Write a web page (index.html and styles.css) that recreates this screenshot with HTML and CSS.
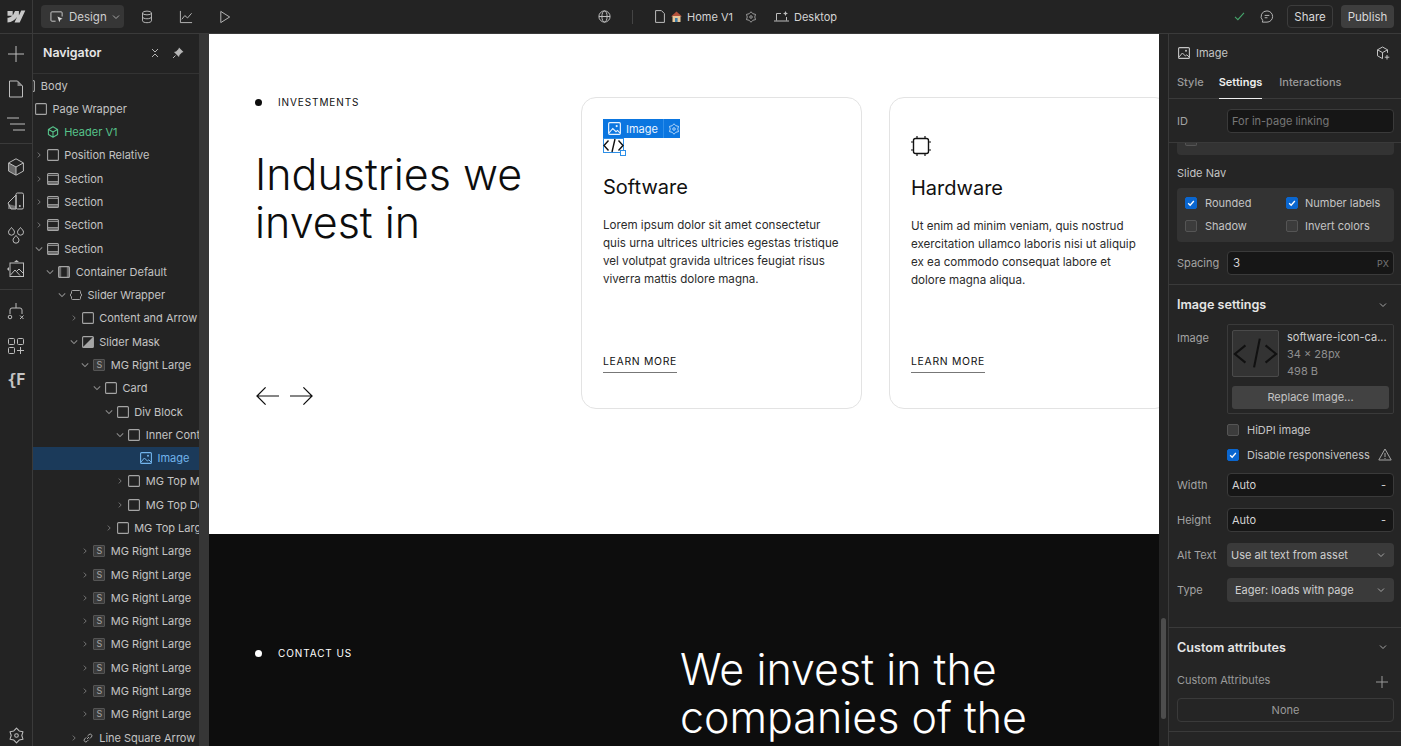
FILE: index.html
```html
<!DOCTYPE html>
<html lang="en">
<head>
<meta charset="utf-8">
<title>Webflow Designer</title>
<link rel="stylesheet" href="styles.css">
</head>
<body>
<svg class="sprite" aria-hidden="true">
  <defs>
    <symbol id="box" viewBox="0 0 12 12"><rect x=".6" y=".6" width="10.8" height="10.8" rx="1" fill="none" stroke="currentColor" stroke-width="1.1"/></symbol>
    <symbol id="section" viewBox="0 0 12 12"><rect x=".6" y=".6" width="10.8" height="10.8" rx="1" fill="none" stroke="currentColor" stroke-width="1.1"/><rect x="1" y="8.6" width="10" height="2.4" fill="currentColor" opacity=".55"/><path d="M1 8.5h10M1 2.5h10" stroke="currentColor" stroke-width=".8"/></symbol>
    <symbol id="container" viewBox="0 0 12 12"><rect x=".6" y=".6" width="10.8" height="10.8" rx="1" fill="none" stroke="currentColor" stroke-width="1.1"/><rect x="1" y="1" width="2.2" height="10" fill="currentColor" opacity=".55"/><rect x="8.8" y="1" width="2.2" height="10" fill="currentColor" opacity=".55"/></symbol>
    <symbol id="slider" viewBox="0 0 12 12"><path d="M2.500 1.500h7a1 1 0 0 1 1 1v1.600L11.800 6l-1.300 1.900v1.600a1 1 0 0 1-1 1h-7a1 1 0 0 1-1-1V7.900L.2 6l1.300-1.900V2.500a1 1 0 0 1 1-1z" fill="none" stroke="currentColor" stroke-width="1"/></symbol>
    <symbol id="mask" viewBox="0 0 12 12"><rect x=".6" y=".6" width="10.8" height="10.8" rx="1" fill="none" stroke="currentColor" stroke-width="1.1"/><path d="M11 1v10H1z" fill="currentColor"/></symbol>
    <symbol id="cube" viewBox="0 0 12 12"><path d="M6 .8l4.600 2.600v5.200L6 11.200 1.400 8.600V3.400zM1.600 3.500L6 6l4.400-2.500M6 6v5" fill="none" stroke="currentColor" stroke-width="1.100" stroke-linejoin="round"/></symbol>
    <symbol id="image" viewBox="0 0 12 12"><rect x=".6" y=".6" width="10.8" height="10.800" rx="1" fill="none" stroke="currentColor" stroke-width="1.100"/><path d="M1 10l3.400-4 3 3 1.400-1.200L11 10" fill="none" stroke="currentColor"/><circle cx="8" cy="3.800" r="1" fill="currentColor"/></symbol>
    <symbol id="link" viewBox="0 0 12 12"><path d="M5 7l2-2M4.200 5.400L2.600 7a1.600 1.600 0 0 0 2.400 2.400l1.600-1.600M7.800 6.600L9.400 5A1.600 1.600 0 0 0 7 2.600L5.400 4.200" fill="none" stroke="currentColor"/></symbol>
    <symbol id="chev-r" viewBox="0 0 6 8"><path d="M1.500 1l3 3-3 3" fill="none" stroke="currentColor"/></symbol>
    <symbol id="chev-d" viewBox="0 0 8 6"><path d="M1 1.500l3 3 3-3" fill="none" stroke="currentColor"/></symbol>
    <symbol id="gear" viewBox="0 0 16 16"><path d="M8 1l2.500 2.670 3.560.83L13 8l1.060 3.500-3.560.83L8 15l-2.500-2.670-3.560-.83L3 8 1.940 4.500l3.560-.83z" fill="none" stroke="currentColor" stroke-linejoin="round"/><circle cx="8" cy="8" r="1.700" fill="none" stroke="currentColor"/></symbol>
    <symbol id="check" viewBox="0 0 12 12"><path d="M2.600 6.200l2.400 2.400 4.400-5" fill="none" stroke="#fff" stroke-width="1.600"/></symbol>
  </defs>
</svg>

<div class="app">
  <header class="topbar">
    <div class="brand">
      <svg class="logo" viewBox="2 0 18 13"><path d="M19.800.5l-5.600 12H9l2.400-5.200h-.1c-2 2.900-4.900 4.800-9.300 5.200V7.800s2.800-.2 4.500-2.100H2V.9h5.200v4.300h.2L9.500.9h3.900v4.300h.1L15.700.5z" fill="#c9c9c9"/></svg>
    </div>
    <div class="tools">
      <div class="design-btn">
        <svg class="ico15" viewBox="0 0 15 15"><path d="M6 12H2a1 1 0 0 1-1-1V3a1 1 0 0 1 1-1h10a1 1 0 0 1 1 1v4" fill="none" stroke="currentColor"/><path d="M8 7l5.400 2.400-2.400 1-1 2.600z" fill="#ddd"/></svg>
        <span>Design</span>
        <svg class="ico8" viewBox="0 0 8 6"><use href="#chev-d"/></svg>
      </div>
      <svg class="ico15 tool" viewBox="0 0 15 15"><ellipse cx="7.500" cy="3.200" rx="4.800" ry="2" fill="none" stroke="currentColor"/><path d="M2.700 3.200v8.400c0 1.100 2.200 2 4.800 2s4.800-.9 4.800-2V3.200M2.700 7.400c0 1.100 2.200 2 4.800 2s4.800-.9 4.800-2" fill="none" stroke="currentColor"/></svg>
      <svg class="ico15 tool" viewBox="0 0 15 15"><path d="M1.500 1v12.500H14M3 10l3.200-4 3 2.500L13.500 3.500" fill="none" stroke="currentColor"/></svg>
      <svg class="ico15 tool" viewBox="0 0 15 15"><path d="M3 1.500l9.500 6-9.500 6z" fill="none" stroke="currentColor" stroke-linejoin="round"/></svg>
    </div>
    <div class="center">
      <svg class="ico13" viewBox="0 0 13 13"><circle cx="6.500" cy="6.500" r="5.600" fill="none" stroke="currentColor"/><ellipse cx="6.500" cy="6.500" rx="2.600" ry="5.600" fill="none" stroke="currentColor"/><path d="M1 6.500h11" stroke="currentColor"/></svg>
      <span class="vsep"></span>
      <svg class="ico-doc" viewBox="0 0 10 13"><path d="M.6.600h5.800l3 3v8.800H.6z" fill="none" stroke="currentColor"/></svg>
      <svg class="ico-house" viewBox="0 0 11 11"><path d="M5.500.500L11 5.500H0z" fill="#b5523b"/><rect x="1.500" y="5" width="8" height="6" fill="#e8c79a"/><rect x="4" y="7" width="2.600" height="4" fill="#3f7ea8"/></svg>
      <span class="home">Home V1</span>
      <svg class="ico12 gear" viewBox="0 0 16 16"><use href="#gear"/></svg>
      <svg class="ico-desk" viewBox="0 0 15 12"><path d="M7 2.500H2.500v7M0 10h15M12.500 6v3.500" fill="none" stroke="currentColor"/><path d="M11.500 0l.8 1.700 1.700.8-1.700.8-.8 1.700-.8-1.700-1.700-.8 1.700-.8z" fill="currentColor"/></svg>
      <span class="desk">Desktop</span>
    </div>
    <div class="actions">
      <svg class="ico-ok" viewBox="0 0 12 10"><path d="M1 5.500l3.200 3L11 1" fill="none" stroke="#46a66c" stroke-width="1.200"/></svg>
      <svg class="ico15 comment" viewBox="0 0 15 15"><path d="M7.500 1a6 6 0 0 1 0 12H2.500l.4-1.800A6 6 0 0 1 7.500 1z" fill="none" stroke="currentColor"/><path d="M5 5.800h5M5 8.300h3" stroke="currentColor"/></svg>
      <button class="btn-share">Share</button>
      <button class="btn-publish">Publish</button>
    </div>
  </header>

  <div class="body">
    <nav class="rail">
      <div class="rail-top">
        <svg class="rail-ico" viewBox="0 0 18 18"><path d="M9 1v16M1 9h16" stroke="currentColor"/></svg>
        <svg class="rail-ico" viewBox="0 0 18 18"><path d="M2.500 1h8l5 5v11h-13z" fill="none" stroke="currentColor" stroke-linejoin="round"/><path d="M10.500 1l5 5h-5z" fill="currentColor" opacity=".6"/></svg>
        <svg class="rail-ico" viewBox="0 0 18 18"><path d="M0 3h12M3 9h15M6 15h12" stroke="currentColor"/></svg>
      </div>
      <div class="rail-mid">
        <svg class="rail-ico" viewBox="0 0 18 18"><path d="M9 .8l7.400 4.100v8.200L9 17.200l-7.400-4.100V4.900zM1.800 5L9 9l7.200-4M9 9v8" fill="none" stroke="currentColor"/><path d="M1.800 5L9 9v8l-7.200-4z" fill="currentColor" opacity=".45"/></svg>
        <svg class="rail-ico" viewBox="0 0 18 18"><rect x="9" y="1" width="7.500" height="16" rx="1.500" fill="none" stroke="currentColor"/><path d="M9 3L1 11l3 6h5z" fill="none" stroke="currentColor"/><path d="M1 12v5h8v-3z" fill="currentColor" opacity=".5"/><circle cx="12.800" cy="14" r="1" fill="currentColor"/></svg>
        <svg class="rail-ico" viewBox="0 0 18 18"><path d="M4.500 1.500c1.500 2 3 3 3 4.700a3 3 0 0 1-6 0C1.500 4.500 3 3.500 4.500 1.500zM13.500 1.500c1.500 2 3 3 3 4.700a3 3 0 0 1-6 0c0-1.700 1.500-2.700 3-4.700zM9 9.500c1.500 2 3 3 3 4.700a3 3 0 0 1-6 0c0-1.700 1.500-2.700 3-4.700z" fill="none" stroke="currentColor"/></svg>
        <svg class="rail-ico" viewBox="0 0 18 18"><rect x="3" y="3" width="13.500" height="13.500" fill="none" stroke="currentColor"/><path d="M3.500 15l4.500-5 5 5.500M10 11l2-2 4 4" fill="none" stroke="currentColor"/><path d="M0 9l2 -2v4z" fill="currentColor"/><path d="M7 2l2.500-2L12 2z" fill="currentColor"/></svg>
      </div>
      <div class="rail-low">
        <svg class="rail-ico" viewBox="0 0 18 18"><path d="M9 0v5M3 11V7a2 2 0 0 1 2-2h8a2 2 0 0 1 2 2v4" fill="none" stroke="currentColor"/><circle cx="3" cy="14" r="1.800" fill="none" stroke="currentColor"/><path d="M13 12.500l3.500 3.500M16.500 12.500L13 16" stroke="currentColor"/></svg>
        <svg class="rail-ico" viewBox="0 0 18 18"><rect x="1.500" y="1.500" width="6" height="6" rx="1" fill="none" stroke="currentColor"/><rect x="10.500" y="1.500" width="6" height="6" rx="1" fill="none" stroke="currentColor"/><rect x="1.500" y="10.500" width="6" height="6" rx="1" fill="none" stroke="currentColor"/><path d="M13.500 10v7M10 13.500h7" stroke="currentColor"/></svg>
        <span class="rail-f">{F</span>
      </div>
      <svg class="rail-ico rail-gear" viewBox="0 0 16 16"><use href="#gear"/></svg>
    </nav>

    <aside class="navigator">
      <div class="nav-head">
        <span class="nav-title">Navigator</span>
        <svg class="ico-collapse" viewBox="0 0 8 10"><path d="M1 1l3 3 3-3M1 9l3-3 3 3" fill="none" stroke="currentColor"/></svg>
        <svg class="ico-pin" viewBox="0 0 12 12"><path d="M7 .5l4.500 4.500-1.500.5L7.500 8l-.5 2L2 5l2-.5L6.500 2z" fill="currentColor"/><path d="M3.500 8.500L1 11" stroke="currentColor"/></svg>
      </div>
      <ul class="tree">
        <li class="row dm1"><i class="chev"></i><svg class="ni"><use href="#box"/></svg><span>Body</span></li>
        <li class="row d0"><i class="chev"></i><svg class="ni"><use href="#box"/></svg><span>Page Wrapper</span></li>
        <li class="row d1 comp"><i class="chev"></i><svg class="ni"><use href="#cube"/></svg><span>Header V1</span></li>
        <li class="row d1"><svg class="chev"><use href="#chev-r"/></svg><svg class="ni"><use href="#box"/></svg><span>Position Relative</span></li>
        <li class="row d1"><svg class="chev"><use href="#chev-r"/></svg><svg class="ni"><use href="#section"/></svg><span>Section</span></li>
        <li class="row d1"><svg class="chev"><use href="#chev-r"/></svg><svg class="ni"><use href="#section"/></svg><span>Section</span></li>
        <li class="row d1"><svg class="chev"><use href="#chev-r"/></svg><svg class="ni"><use href="#section"/></svg><span>Section</span></li>
        <li class="row d1"><svg class="chev"><use href="#chev-d"/></svg><svg class="ni"><use href="#section"/></svg><span>Section</span></li>
        <li class="row d2"><svg class="chev"><use href="#chev-d"/></svg><svg class="ni"><use href="#container"/></svg><span>Container Default</span></li>
        <li class="row d3"><svg class="chev"><use href="#chev-d"/></svg><svg class="ni"><use href="#slider"/></svg><span>Slider Wrapper</span></li>
        <li class="row d4"><svg class="chev"><use href="#chev-r"/></svg><svg class="ni"><use href="#box"/></svg><span>Content and Arrow</span></li>
        <li class="row d4"><svg class="chev"><use href="#chev-d"/></svg><svg class="ni"><use href="#mask"/></svg><span>Slider Mask</span></li>
        <li class="row d5"><svg class="chev"><use href="#chev-d"/></svg><span class="ni sym">S</span><span>MG Right Large</span></li>
        <li class="row d6"><svg class="chev"><use href="#chev-d"/></svg><svg class="ni"><use href="#box"/></svg><span>Card</span></li>
        <li class="row d7"><svg class="chev"><use href="#chev-d"/></svg><svg class="ni"><use href="#box"/></svg><span>Div Block</span></li>
        <li class="row d8"><svg class="chev"><use href="#chev-d"/></svg><svg class="ni"><use href="#box"/></svg><span>Inner Content</span></li>
        <li class="row d9 selected"><i class="chev"></i><svg class="ni"><use href="#image"/></svg><span>Image</span></li>
        <li class="row d8"><svg class="chev"><use href="#chev-r"/></svg><svg class="ni"><use href="#box"/></svg><span>MG Top Medium</span></li>
        <li class="row d8"><svg class="chev"><use href="#chev-r"/></svg><svg class="ni"><use href="#box"/></svg><span>MG Top Default</span></li>
        <li class="row d7"><svg class="chev"><use href="#chev-r"/></svg><svg class="ni"><use href="#box"/></svg><span>MG Top Large</span></li>
        <li class="row d5"><svg class="chev"><use href="#chev-r"/></svg><span class="ni sym">S</span><span>MG Right Large</span></li>
        <li class="row d5"><svg class="chev"><use href="#chev-r"/></svg><span class="ni sym">S</span><span>MG Right Large</span></li>
        <li class="row d5"><svg class="chev"><use href="#chev-r"/></svg><span class="ni sym">S</span><span>MG Right Large</span></li>
        <li class="row d5"><svg class="chev"><use href="#chev-r"/></svg><span class="ni sym">S</span><span>MG Right Large</span></li>
        <li class="row d5"><svg class="chev"><use href="#chev-r"/></svg><span class="ni sym">S</span><span>MG Right Large</span></li>
        <li class="row d5"><svg class="chev"><use href="#chev-r"/></svg><span class="ni sym">S</span><span>MG Right Large</span></li>
        <li class="row d5"><svg class="chev"><use href="#chev-r"/></svg><span class="ni sym">S</span><span>MG Right Large</span></li>
        <li class="row d5"><svg class="chev"><use href="#chev-r"/></svg><span class="ni sym">S</span><span>MG Right Large</span></li>
        <li class="row d4"><svg class="chev"><use href="#chev-r"/></svg><svg class="ni"><use href="#link"/></svg><span>Line Square Arrow</span></li>
      </ul>
    </aside>
    <div class="gutter-left"></div>

    <main class="canvas">
      <section class="light">
        <div class="intro">
          <div class="tag"><i class="dot"></i><span>INVESTMENTS</span></div>
          <h1 class="display">Industries we<br>invest in</h1>
          <div class="arrows">
            <svg class="arrow" viewBox="0 0 24 20"><path d="M24 10H1M10 1l-9 9 9 9" fill="none" stroke="#0d0d0d" stroke-width="1.300"/></svg>
            <svg class="arrow" viewBox="0 0 24 20"><path d="M0 10h23M14 1l9 9-9 9" fill="none" stroke="#0d0d0d" stroke-width="1.300"/></svg>
          </div>
        </div>
        <div class="cards">
          <article class="card first">
            <div class="sel">
              <div class="sel-label">
                <svg class="sel-img" viewBox="0 0 12 12"><use href="#image"/></svg>
                <span>Image</span>
                <i class="sel-sep"></i>
                <svg class="sel-gear" viewBox="0 0 16 16"><use href="#gear"/></svg>
              </div>
              <svg class="code-ico" viewBox="0 0 21 15"><path d="M5.500 2.500L1 7.500l4.500 5M15.500 2.500l4.500 5-4.500 5M12 1L9 14" fill="none" stroke="#111" stroke-width="1.400"/></svg>
              <i class="sel-handle"></i>
            </div>
            <h3>Software</h3>
            <p>Lorem ipsum dolor sit amet consectetur<br>quis urna ultrices ultricies egestas tristique<br>vel volutpat gravida ultrices feugiat risus<br>viverra mattis dolore magna.</p>
            <a class="more">LEARN MORE</a>
          </article>
          <article class="card second">
            <svg class="chip" viewBox="0 0 20 20"><rect x="2.500" y="2.500" width="15" height="15" rx="2" fill="none" stroke="#111" stroke-width="1.400"/><path d="M6 0v2.500M14 0v2.500M6 17.500V20M14 17.500V20M0 6h2.500M0 14h2.500M17.500 6H20M17.500 14H20" stroke="#111" stroke-width="1.200"/></svg>
            <h3>Hardware</h3>
            <p>Ut enim ad minim veniam, quis nostrud<br>exercitation ullamco laboris nisi ut aliquip<br>ex ea commodo consequat labore et<br>dolore magna aliqua.</p>
            <a class="more">LEARN MORE</a>
          </article>
        </div>
      </section>
      <section class="dark">
        <div class="tag tag-dark"><i class="dot"></i><span>CONTACT US</span></div>
        <h2 class="display">We invest in the<br>companies of the</h2>
      </section>
    </main>

    <div class="gutter-right"><i class="thumb"></i></div>

    <aside class="panel">
      <div class="panel-sticky">
        <div class="p-head">
          <svg class="ico12" viewBox="0 0 12 12"><use href="#image"/></svg>
          <span>Image</span>
          <svg class="ico-addc" viewBox="0 0 14 14"><path d="M6.500 1l5 2.800v3M1.500 3.800v6l5 2.800M1.500 3.800L6.500 1M1.500 3.800l5 2.800 5-2.800M6.500 6.600v6" fill="none" stroke="currentColor"/><path d="M11 9v4.500M8.800 11.200h4.500" stroke="currentColor"/></svg>
        </div>
        <div class="tabs">
          <span>Style</span><span class="active">Settings</span><span>Interactions</span>
        </div>
        <div class="id-row">
          <label>ID</label>
          <div class="field ph">For in-page linking</div>
        </div>
      </div>

      <div class="clipbox"><i class="cb"></i></div>
      <div class="slide-title">Slide Nav</div>
      <div class="optbox">
        <div class="opt"><i class="cb on"><svg viewBox="0 0 12 12"><use href="#check"/></svg></i><span>Rounded</span></div>
        <div class="opt"><i class="cb on"><svg viewBox="0 0 12 12"><use href="#check"/></svg></i><span>Number labels</span></div>
        <div class="opt"><i class="cb"></i><span>Shadow</span></div>
        <div class="opt"><i class="cb"></i><span>Invert colors</span></div>
      </div>
      <div class="prop spacing"><label>Spacing</label><div class="field"><span>3</span><em>PX</em></div></div>

      <div class="group image-group">
        <div class="g-head"><span>Image settings</span><svg class="ico8" viewBox="0 0 8 6"><use href="#chev-d"/></svg></div>
        <div class="img-row">
          <label>Image</label>
          <div class="asset">
            <div class="asset-top">
              <div class="thumbimg"><svg viewBox="0 0 47 47"><path d="M13 15L2 24l11 9M34 15l11 9-11 9M28 8l-6 30" fill="none" stroke="#111" stroke-width="2.200"/></svg></div>
              <div class="asset-meta"><strong>software-icon-ca...</strong><span>34 x 28px</span><span>498 B</span></div>
            </div>
            <div class="replace">Replace Image...</div>
          </div>
        </div>
        <div class="opt wide hidpi"><i class="cb big"></i><span>HiDPI image</span></div>
        <div class="opt wide disable"><i class="cb big on"><svg viewBox="0 0 12 12"><use href="#check"/></svg></i><span>Disable responsiveness</span>
          <svg class="warn" viewBox="0 0 14 13"><path d="M7 1l6.200 11H.8z" fill="none" stroke="currentColor" stroke-linejoin="round"/><path d="M7 5v4M7 10v1" stroke="currentColor"/></svg>
        </div>
        <div class="prop"><label>Width</label><div class="field"><span>Auto</span><b>-</b></div></div>
        <div class="prop"><label>Height</label><div class="field"><span>Auto</span><b>-</b></div></div>
        <div class="prop"><label>Alt Text</label><div class="select alt"><span>Use alt text from asset</span><svg class="ico8" viewBox="0 0 8 6"><use href="#chev-d"/></svg></div></div>
        <div class="prop"><label>Type</label><div class="select"><span>Eager: loads with page</span><svg class="ico8" viewBox="0 0 8 6"><use href="#chev-d"/></svg></div></div>
      </div>

      <div class="group attrs">
        <div class="g-head"><span>Custom attributes</span><svg class="ico8" viewBox="0 0 8 6"><use href="#chev-d"/></svg></div>
        <div class="attr-label"><span>Custom Attributes</span><svg class="ico-plus" viewBox="0 0 12 12"><path d="M6 0v12M0 6h12" stroke="currentColor"/></svg></div>
        <div class="none-box">None</div>
      </div>
    </aside>
  </div>
</div>
</body>
</html>
```
FILE: styles.css
```css
* { box-sizing: border-box; }
html, body { margin: 0; padding: 0; height: 100%; background: #fff; overflow: hidden; }
body { font-family: Inter, "Liberation Sans", sans-serif; font-size: 11px; color: #d9d9d9; }
.sprite { width: 0; height: 0; display: block; overflow: hidden; }
ul { list-style: none; margin: 0; padding: 0; }
svg { display: block; flex: none; }
i { font-style: normal; display: block; }

.app { height: 746px; display: flex; flex-direction: column; background: #232323; }

/* top bar */
.topbar { height: 34px; flex: none; display: flex; align-items: center; background: #232323; border-bottom: 1px solid #3a3a3a; }
.brand { width: 33px; height: 33px; flex: none; display: flex; align-items: center; justify-content: center; border-right: 1px solid #3a3a3a; }
.logo { width: 19px; height: 13px; }
.tools { display: flex; align-items: center; width: 225px; flex: none; padding-left: 8px; color: #bdbdbd; }
.design-btn { width: 83px; height: 23px; flex: none; background: #363636; border-radius: 4px; display: flex; align-items: center; padding-left: 9px; gap: 5px; color: #cfcfcf; font-size: 11.5px; margin-right: 16px; }
.ico15 { width: 14px; height: 14px; }
.ico8 { width: 8px; height: 6px; color: #a5a5a5; }
.tool { margin-right: 25px; }
.center { display: flex; align-items: center; padding-left: 340px; color: #bdbdbd; font-size: 11px; }
.ico13 { width: 13px; height: 13px; }
.vsep { width: 1px; height: 14px; background: #444; margin: 0 21px; }
.ico-doc { width: 10px; height: 13px; margin-right: 6px; margin-left: 1px; }
.ico-house { width: 11px; height: 11px; margin-right: 5px; }
.home { color: #d4d4d4; }
.gear { margin-left: 12px; width: 13px; height: 13px; }
.ico12 { width: 12px; height: 12px; }
.ico-desk { width: 15px; height: 12px; margin-left: 17px; margin-right: 5px; }
.desk { color: #d4d4d4; }
.actions { display: flex; align-items: center; margin-left: auto; padding-right: 7px; color: #bdbdbd; }
.ico-ok { width: 11px; height: 9px; margin-right: 15px; }
.comment { margin-right: 13px; }
button { font: inherit; font-size: 11.5px; height: 23px; border-radius: 4px; color: #d9d9d9; padding: 0; }
.btn-share { width: 46px; background: #232323; border: 1px solid #3c3c3c; margin-right: 8px; }
.btn-publish { width: 53px; background: #3e3e3e; border: 0; }

/* main */
.body { flex: 1; min-height: 0; display: flex; }
.rail { width: 33px; flex: none; background: #232323; border-right: 1px solid #3a3a3a; display: flex; flex-direction: column; color: #bdbdbd; }
.rail-ico { width: 18px; height: 18px; margin: 0 auto; }
.rail-top { height: 110px; padding-top: 11px; display: flex; flex-direction: column; gap: 17px; border-bottom: 1px solid #3a3a3a; }
.rail-mid { height: 146px; padding-top: 14px; display: flex; flex-direction: column; gap: 16px; border-bottom: 1px solid #3a3a3a; }
.rail-low { padding-top: 13px; display: flex; flex-direction: column; gap: 16px; }
.rail-f { text-align: center; font-size: 16px; line-height: 18px; font-weight: 700; font-family: "DejaVu Sans Mono", monospace; letter-spacing: -1px; color: #c4c4c4; }
.rail-gear { margin-top: auto; margin-bottom: 2px; width: 17px; height: 17px; }

.navigator { width: 166px; flex: none; background: #232323; overflow: hidden; }
.nav-head { height: 40px; display: flex; align-items: center; padding: 0 0 2px 10px; border-bottom: 1px solid #333; color: #b5b5b5; }
.nav-title { font-size: 12.4px; font-weight: 600; color: #e6e6e6; flex: 1; }
.ico-collapse { width: 8px; height: 10px; margin-right: 13px; }
.ico-pin { width: 12px; height: 12px; margin-right: 15px; }
.row { --d: 0; height: 23.29px; display: flex; align-items: center; white-space: nowrap; overflow: hidden; color: #c4c4c4; }
.row .chev { width: 12px; height: 8px; flex: none; margin-left: calc(var(--d) * 11.67px - 12px); margin-right: 2px; color: #8a8a8a; }
.row .chev use { transform: scale(.8); transform-origin: 6px 4px; }
.row .ni { width: 12px; height: 12px; flex: none; margin-right: 5.5px; color: #a5a5a5; }
.dm1 { --d: -1; } .d0 { --d: 0; } .d1 { --d: 1; } .d2 { --d: 2; } .d3 { --d: 3; } .d4 { --d: 4; }
.d5 { --d: 5; } .d6 { --d: 6; } .d7 { --d: 7; } .d8 { --d: 8; } .d9 { --d: 9; }
.comp, .comp .ni { color: #56c28a; }
.selected { background: #1b3a5a; color: #72b4ec; }
.selected .ni { color: #72b4ec; }
.sym { background: #3a3a3a; border: 1px solid #555; border-radius: 1px; font-size: 9px; line-height: 10px; text-align: center; color: #bbb; font-style: normal; }
.gutter-left { width: 10px; flex: none; background: #363636; }

/* canvas */
.canvas { width: 950px; flex: none; background: #fff; overflow: hidden; display: flex; flex-direction: column; font-family: Inter, sans-serif; color: #0d0d0d; }
.light { height: 500px; flex: none; display: flex; padding: 61px 0 0 46px; background: #fff; }
.intro { width: 326px; flex: none; }
.tag { height: 14px; display: flex; align-items: center; gap: 16px; font-size: 10px; letter-spacing: .9px; color: #111; }
.dot { width: 7px; height: 7px; border-radius: 50%; background: #0d0d0d; }
.display { margin: 0; font-size: 43px; line-height: 48px; font-weight: 300; color: #0d0d0d; white-space: nowrap; }
h1.display { margin-top: 41px; }
.arrows { margin-top: 140px; display: flex; gap: 11px; padding-left: 1px; }
.arrow { width: 23px; height: 20px; }
.cards { display: flex; gap: 27px; margin-top: 2px; }
.card { width: 281px; height: 312px; flex: none; border: 1px solid #e3e3e3; border-radius: 15px; padding: 40px 21px 35px; display: flex; flex-direction: column; background: #fff; }
.card.second { padding-top: 38px; }
.card h3 { margin: 21px 0 16px; font-size: 20px; line-height: 26px; font-weight: 400; color: #111; }
.card.second h3 { margin-top: 19px; }
.card p { margin: 0; font-size: 11.6px; line-height: 18px; color: #2b2b2b; white-space: nowrap; }
.more { margin-top: auto; align-self: flex-start; font-size: 10.4px; line-height: 14px; letter-spacing: .7px; color: #111; padding-bottom: 3px; border-bottom: 1px solid #777; }
.sel { position: relative; width: 21px; height: 15px; box-shadow: inset 0 0 0 1px #2d8fe8; }
.code-ico { width: 21px; height: 15px; }
.sel-label { position: absolute; left: 0; top: -19px; width: 77px; height: 19px; background: #0b76e0; color: #e8f3ff; display: flex; align-items: center; padding-left: 5px; gap: 5px; font-size: 11px; white-space: nowrap; }
.sel-img { width: 13px; height: 13px; }
.sel-sep { width: 1px; height: 19px; background: #2e8eea; }
.sel-gear { width: 12px; height: 12px; margin-left: -1px; }
.sel-handle { position: absolute; right: -2px; bottom: -3px; width: 6px; height: 6px; background: #fff; border: 1px solid #2d8fe8; }
.chip { width: 20px; height: 20px; margin-left: 0; }
.dark { flex: 1; background: #0d0d0d; display: flex; padding: 112px 0 0 46px; overflow: hidden; }
.tag-dark { width: 425px; flex: none; color: #fff; }
.tag-dark .dot { background: #fff; }
.dark .display { color: #fff; margin-top: -1px; }

.gutter-right { width: 10px; flex: none; background: #232323; border-right: 1px solid #3a3a3a; padding: 584px 0 0 2px; }
.thumb { width: 5px; height: 101px; border-radius: 3px; background: #4d4d4d; }

/* right panel */
.panel { flex: 1; background: #252525; overflow: hidden; color: #c4c4c4; min-width: 0; }
.panel-sticky { border-bottom: 1px solid #3a3a3a; }
.p-head { height: 34px; display: flex; align-items: center; gap: 6px; padding: 3px 11px 0 9px; color: #c4c4c4; }
.ico-addc { width: 14px; height: 14px; margin-left: auto; }
.tabs { height: 31px; display: flex; gap: 15px; padding: 0 8px; align-items: center; border-bottom: 1px solid #3a3a3a; color: #9a9a9a; font-weight: 500; }
.tabs span { height: 31px; line-height: 28px; }
.tabs .active { color: #eee; font-weight: 600; border-bottom: 1px solid #eee; margin-right: 2px; }
.id-row { height: 43px; display: flex; align-items: center; padding: 0 7px 0 8px; }
label { width: 50px; flex: none; color: #a3a3a3; }
.field { flex: 1; height: 24px; border: 1px solid #3a3a3a; border-radius: 4px; background: #161616; display: flex; align-items: center; justify-content: space-between; padding: 0 4px; color: #d4d4d4; }
.field em { font-style: normal; font-size: 9px; color: #777; }
.field b { font-weight: 400; margin-right: 3px; }
.ph { color: #777; }
.clipbox { margin: 0 7px 0 8px; height: 12px; background: #333; border-radius: 0 0 4px 4px; padding-left: 8px; }
.clipbox .cb { height: 3px; border-top: 0; border-radius: 0 0 2px 2px; }
.cb { width: 12px; height: 12px; flex: none; background: #3c3c3c; border: 1px solid #555; border-radius: 2px; }
.cb.on { background: #0a66cf; border-color: #0a66cf; }
.cb svg { width: 10px; height: 10px; }
.slide-title { margin: 11px 8px 0; height: 22px; line-height: 14px; }
.optbox { margin: 0 7px 0 8px; height: 54px; background: #333; border-radius: 4px; display: grid; grid-template-columns: 101px 1fr; grid-auto-rows: 23.5px; padding: 3px 0 0 8px; align-content: start; }
.opt { display: flex; align-items: center; gap: 8px; white-space: nowrap; }
.optbox .opt:nth-child(even) { gap: 7px; }
.prop { height: 35px; display: flex; align-items: center; padding: 0 7px 0 8px; }
.spacing { height: 43px; border-bottom: 1px solid #3a3a3a; }
.spacing .field { padding-left: 5px; font-size: 11.5px; }
.group { border-bottom: 1px solid #3a3a3a; }
.image-group { height: 343px; }
.g-head { height: 39px; padding: 0 14px 0 8px; display: flex; align-items: center; justify-content: space-between; font-weight: 600; font-size: 12.6px; color: #e6e6e6; }
.img-row { display: flex; padding: 0 7px 0 8px; height: 90px; }
.img-row label { padding-top: 7px; }
.asset { flex: 1; height: 90px; border: 1px solid #3a3a3a; border-radius: 2px; padding: 5px 4px 4px; }
.asset-top { display: flex; gap: 8px; height: 56px; }
.thumbimg { width: 47px; height: 47px; background: #333; border: 1px solid #4a4a4a; border-radius: 2px; }
.thumbimg svg { width: 45px; height: 45px; }
.asset-meta { display: flex; flex-direction: column; line-height: 17px; color: #8f8f8f; white-space: nowrap; margin-top: -1px; }
.asset-meta strong { font-weight: 400; color: #cfcfcf; }
.replace { height: 23px; background: #424242; border-radius: 3px; text-align: center; line-height: 23px; color: #c4c4c4; }
.wide { padding-left: 58px; padding-right: 10px; gap: 8px; }
.hidpi { height: 25px; margin-top: 3px; }
.disable { height: 25px; }
.warn { width: 14px; height: 13px; margin-left: auto; color: #a5a5a5; }
.select { flex: 1; height: 24px; background: #3a3a3a; border-radius: 4px; display: flex; align-items: center; justify-content: space-between; padding: 0 9px 0 8px; color: #cfcfcf; }
.select.alt { padding-left: 4px; }
.attrs { height: 104px; }
.attrs .g-head { height: 38px; }
.attr-label { height: 32px; display: flex; align-items: center; justify-content: space-between; padding: 0 13px 4px 8px; color: #9a9a9a; }
.ico-plus { width: 12px; height: 12px; margin-top: 4px; }
.none-box { margin: 0 7px 0 8px; height: 24px; border: 1px solid #3a3a3a; border-radius: 4px; text-align: center; line-height: 22px; color: #9a9a9a; }
```
